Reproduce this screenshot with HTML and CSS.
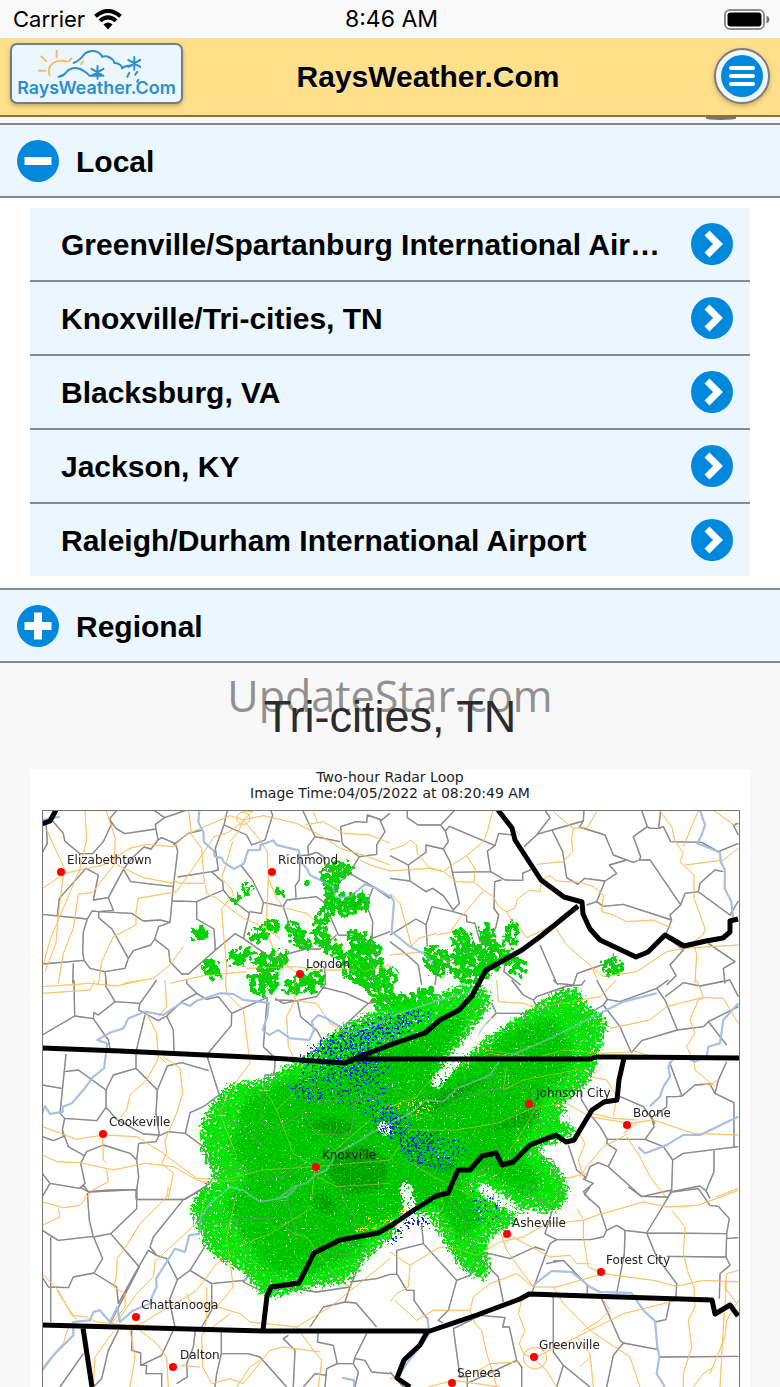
FILE: index.html
```html
<!DOCTYPE html>
<html lang="en">
<head>
<meta charset="utf-8">
<meta name="viewport" content="width=device-width, initial-scale=1">
<title>RaysWeather.Com</title>
<link rel="stylesheet" href="styles.css">
</head>
<body>
<div class="status">
  <div class="status-side">
    <span>Carrier</span>
    <svg class="wifi" viewBox="0 0 28 21" aria-hidden="true">
      <path d="M1.500 7.200Q14-3.200 26.500 7.200M6 11.800Q14 5 22 11.800" fill="none" stroke="#000" stroke-width="4"/>
      <path d="M9.500 15.500Q14 11.500 18.500 15.500L14 20.500Z"/>
    </svg>
  </div>
  <span class="clock">8:46 AM</span>
  <div class="status-side status-end">
    <svg class="battery" viewBox="0 0 46 21" aria-hidden="true">
      <rect x="1" y="1" width="39" height="19" rx="5" fill="#fff" stroke="#8c8c8c" stroke-width="2"/>
      <rect x="3.500" y="3.500" width="34" height="14" rx="3"/>
      <path d="M42.500 6.500Q45.500 8 45.500 10.500T42.500 14.500Z" fill="#777"/>
    </svg>
  </div>
</div>

<header class="bar">
  <a class="logo" href="#" aria-label="RaysWeather.Com home">
    <svg viewBox="0 0 170 58" aria-hidden="true">
      <g fill="none" stroke="#f5bd62" stroke-width="2">
        <path d="M38 31C34 20 44 13 56 17M45 5V13M29 11L35 17M26 26H34M57 17L60 13M72 16L69 20"/>
      </g>
      <g fill="none" stroke="#2b8fc9" stroke-width="2" stroke-linecap="round">
        <path d="M62 18C67 16 70 13 72 10C78 4 87 5 91 12C96 10 102 14 103 18C108 18 112 22 110 24Q114 20 120 21"/>
        <path d="M47 32Q52 31 54 28C60 21 68 23 72 26Q76 28 78 31H90"/>
        <path d="M80 24L92 31M92 24L80 31M86 21V34M117 15L129 22M129 15L117 22M123 12V25"/>
        <path d="M118 28L116 32M126 27L124 30M127 35L126 37"/>
      </g>
      <text class="logo-text" x="85" y="49" text-anchor="middle">RaysWeather.Com</text>
    </svg>
  </a>
  <h1 class="title">RaysWeather.Com</h1>
  <button class="menu" type="button" aria-label="Menu"><span class="menu-disc"><i></i><i></i><i></i></span></button>
</header>

<main>
  <button class="group" type="button" aria-expanded="true">
    <svg class="disc" viewBox="0 0 42 42" aria-hidden="true"><circle cx="21" cy="21" r="21"/><path d="M7.500 21H34.500"/></svg>
    <span>Local</span>
  </button>
  <ul class="stations">
    <li><a href="#"><span>Greenville/Spartanburg International Airport</span><svg class="disc" viewBox="0 0 42 42" aria-hidden="true"><circle cx="21" cy="21" r="21"/><path class="chev" d="M16 10L27 21L16 32"/></svg></a></li>
    <li><a href="#"><span>Knoxville/Tri-cities, TN</span><svg class="disc" viewBox="0 0 42 42" aria-hidden="true"><circle cx="21" cy="21" r="21"/><path class="chev" d="M16 10L27 21L16 32"/></svg></a></li>
    <li><a href="#"><span>Blacksburg, VA</span><svg class="disc" viewBox="0 0 42 42" aria-hidden="true"><circle cx="21" cy="21" r="21"/><path class="chev" d="M16 10L27 21L16 32"/></svg></a></li>
    <li><a href="#"><span>Jackson, KY</span><svg class="disc" viewBox="0 0 42 42" aria-hidden="true"><circle cx="21" cy="21" r="21"/><path class="chev" d="M16 10L27 21L16 32"/></svg></a></li>
    <li><a href="#"><span>Raleigh/Durham International Airport</span><svg class="disc" viewBox="0 0 42 42" aria-hidden="true"><circle cx="21" cy="21" r="21"/><path class="chev" d="M16 10L27 21L16 32"/></svg></a></li>
  </ul>
  <button class="group" type="button" aria-expanded="false">
    <svg class="disc" viewBox="0 0 42 42" aria-hidden="true"><circle cx="21" cy="21" r="21"/><path d="M7.500 21H34.500M21 7.500V34.500"/></svg>
    <span>Regional</span>
  </button>

  <section class="radar">
    <div class="watermark">UpdateStar.com</div>
    <h2 class="place">Tri-cities, TN</h2>
    <figure class="loop">
      <figcaption>Two-hour Radar Loop<br>Image Time:04/05/2022 at 08:20:49 AM</figcaption>
      <svg class="map" viewBox="30 803 720 584" role="img" aria-label="Radar map">
        <defs>
          <clipPath id="frame"><rect x="42" y="810" width="697" height="590"/></clipPath>
          <filter id="f-bright" filterUnits="userSpaceOnUse" x="30" y="803" width="720" height="600" color-interpolation-filters="sRGB">
            <feGaussianBlur in="SourceAlpha" stdDeviation="8" result="b"/>
            <feTurbulence type="fractalNoise" baseFrequency="0.4" numOctaves="2" seed="4" result="n"/>
            <feComposite in="b" in2="n" operator="arithmetic" k1="10" k2="-2" k4="-1" result="m"/>
            <feComponentTransfer in="m" result="t"><feFuncA type="linear" slope="6"/></feComponentTransfer>
            <feFlood flood-color="#00e400"/><feComposite in2="t" operator="in"/>
          </filter>
          <filter id="f-cells" filterUnits="userSpaceOnUse" x="30" y="803" width="720" height="600" color-interpolation-filters="sRGB">
            <feGaussianBlur in="SourceAlpha" stdDeviation="4" result="b"/>
            <feTurbulence type="fractalNoise" baseFrequency="0.2" numOctaves="3" seed="9" result="n"/>
            <feComposite in="b" in2="n" operator="arithmetic" k1="12" k2="-3.200" k4="-1" result="m"/>
            <feComponentTransfer in="m" result="t"><feFuncA type="linear" slope="6"/></feComponentTransfer>
            <feFlood flood-color="#00d400"/><feComposite in2="t" operator="in"/>
          </filter>
          <filter id="f-mid" filterUnits="userSpaceOnUse" x="30" y="803" width="720" height="600" color-interpolation-filters="sRGB">
            <feGaussianBlur in="SourceAlpha" stdDeviation="9" result="b"/>
            <feTurbulence type="fractalNoise" baseFrequency="0.5" numOctaves="2" seed="14" result="n"/>
            <feComposite in="b" in2="n" operator="arithmetic" k1="8" k2="-2" k4="-1" result="m"/>
            <feComponentTransfer in="m" result="t"><feFuncA type="linear" slope="2"/></feComponentTransfer>
            <feFlood flood-color="#00be00"/><feComposite in2="t" operator="in"/>
          </filter>
          <filter id="f-dark" filterUnits="userSpaceOnUse" x="30" y="803" width="720" height="600" color-interpolation-filters="sRGB">
            <feGaussianBlur in="SourceAlpha" stdDeviation="6" result="b"/>
            <feTurbulence type="fractalNoise" baseFrequency="0.5" numOctaves="2" seed="23" result="n"/>
            <feComposite in="b" in2="n" operator="arithmetic" k1="4" k4="-1.500" result="m"/>
            <feComponentTransfer in="m" result="t"><feFuncA type="linear" slope="2"/></feComponentTransfer>
            <feFlood flood-color="#009a00"/><feComposite in2="t" operator="in"/>
          </filter>
          <filter id="f-white" filterUnits="userSpaceOnUse" x="30" y="803" width="720" height="600" color-interpolation-filters="sRGB">
            <feGaussianBlur in="SourceAlpha" stdDeviation="3" result="b"/>
            <feTurbulence type="fractalNoise" baseFrequency="0.4" numOctaves="2" seed="7" result="n"/>
            <feComposite in="b" in2="n" operator="arithmetic" k1="10" k2="-2" k4="-1" result="m"/>
            <feComponentTransfer in="m" result="t"><feFuncA type="linear" slope="6"/></feComponentTransfer>
            <feFlood flood-color="#fff"/><feComposite in2="t" operator="in"/>
          </filter>
          <filter id="f-blue" filterUnits="userSpaceOnUse" x="30" y="803" width="720" height="600" color-interpolation-filters="sRGB">
            <feGaussianBlur in="SourceAlpha" stdDeviation="5" result="b"/>
            <feTurbulence type="fractalNoise" baseFrequency="0.4" numOctaves="2" seed="31" result="n"/>
            <feComposite in="b" in2="n" operator="arithmetic" k1="4" k4="-2.150" result="m"/>
            <feComponentTransfer in="m" result="t"><feFuncA type="linear" slope="12"/></feComponentTransfer>
            <feFlood flood-color="#0a2fc8"/><feComposite in2="t" operator="in"/>
          </filter>
          <filter id="f-yellow" filterUnits="userSpaceOnUse" x="30" y="803" width="720" height="600" color-interpolation-filters="sRGB">
            <feGaussianBlur in="SourceAlpha" stdDeviation="2" result="b"/>
            <feTurbulence type="fractalNoise" baseFrequency="0.4" numOctaves="2" seed="44" result="n"/>
            <feComposite in="b" in2="n" operator="arithmetic" k1="4" k4="-2.200" result="m"/>
            <feComponentTransfer in="m" result="t"><feFuncA type="linear" slope="12"/></feComponentTransfer>
            <feFlood flood-color="#e6f000"/><feComposite in2="t" operator="in"/>
          </filter>
          <g id="lines">
            <g transform="translate(30 765) scale(.33333)">
              <path class="county" d="M37 262L52 235L48 168M68 168L100 205L104 228L150 266H188L220 230L243 180L240 160L260 136M240 165L258 190L284 206L378 192L376 178L404 158L370 135M404 158L470 135M378 192L384 225L363 252L342 246L310 275L282 310L235 398L190 405L205 330L168 310L88 400L82 450M384 225L395 218L436 236L443 258L430 365L302 350L282 315M430 240L475 205L518 195M443 336L545 320L565 315L556 250L582 180L592 136M582 180L650 210L665 240L705 225L728 150L722 136M545 320L578 350L580 375L500 410L426 408L430 365M426 408L420 472L390 465L340 468L305 445L206 440L186 438L172 462L37 448M235 398L250 436L206 440L206 458L246 492L295 580L310 557L362 540L374 522L386 485L420 472M172 462L160 500L158 560L162 586L180 610L225 620L285 610L295 580M162 586L37 597M500 410L500 462L552 492L556 556L475 627L455 627L420 590L416 555L374 522M556 556L615 506L640 520L658 445L600 400L580 375M632 300L668 346L700 412L694 445L658 440M700 412L760 425L770 405L860 395L882 412L908 370L958 325L988 275L940 240L936 230L932 185L978 170L1010 172L1012 150L1055 165L1080 145M988 275L1040 268V240L1065 200L1050 165M818 136L855 215L833 245L836 270L810 272L808 345L796 362L798 398M855 215L930 230M836 270L860 262L880 275L890 320L958 325L1030 365L1080 400M1030 365L1010 420L1028 470L1026 520L1080 500M882 412L925 510L1000 512L1040 570L1020 660M760 425L785 500L826 552H870L920 510M640 520L725 580L826 552M725 580L700 660M886 660L884 610L860 590M225 620L230 660M130 595L128 655"/>
              <path class="road" d="M165 136L170 225L150 310L60 525L40 600M50 195L103 310L85 450L78 535L45 620M228 136L256 220L252 300L188 382L145 388L130 490L100 565L85 655M37 370L105 325L165 312L220 300L300 250L350 238L430 245L470 208L600 152L640 165L700 152L800 175L860 205L935 252L1000 270L1080 300M430 355L340 338L262 300M318 440L325 400L440 380L530 250L552 215L590 205L640 170M526 355L450 355L430 345M523 355L515 250L485 210L476 136M526 358L530 385L560 400L640 460L700 485L750 520M608 230L575 340L605 372L610 390L575 430L580 500L590 600L586 660M318 440V480L250 515L215 590L205 660M640 165L668 140L620 136M640 165L625 200L600 230M640 165L690 225L712 260L715 340L708 500L730 550L780 610L830 640M770 430L830 445L890 500L1000 620L1080 600M650 610L800 605L860 615H980M280 655L370 640L420 600L460 545M420 655L520 632L650 620M826 180L880 170L940 205L1020 210L1080 235M850 140L862 170M1080 318L1020 300L990 285M715 340L740 400L762 430M620 160A20 18 0 1 0 660 160A20 18 0 1 0 620 160"/>
              <path class="river" d="M508 136L505 172L520 200L522 232L552 258L554 275L575 278L582 292L612 312L642 295L654 256L690 255L692 240L730 226L740 240L806 256L812 290L830 310L840 330L910 365L915 395L960 395L1005 358L1035 368L1080 395M37 165L90 155"/>
            </g>
            <g transform="translate(390 765) scale(.33333)">
              <path class="county" d="M52 136V158L84 180H152L194 136M152 180L166 198L175 230L160 252L108 240V262L55 300L0 272M55 300L60 348L0 340M60 348L108 380L128 370L160 392L190 435L208 415L180 290L160 252M166 198L178 184L315 242L326 205L368 210M315 242L292 258L302 320L186 322M302 320L345 345L398 346V325L430 310M402 245L440 210L480 158L465 136M440 208L580 168L582 136M580 168L568 186L645 210L670 270L730 292L748 285L752 275L730 215L772 185L755 136M486 195L518 260L530 338L564 358L584 340L645 348L680 325L658 300L710 285M645 348L620 410L640 424L700 418L845 465L840 450L872 420L780 285L748 285M620 410L590 420M772 185L780 190H806L812 136M806 190L820 185L842 230L935 232L985 260L1045 235M872 420L885 385L925 380L930 355L975 315L1000 320M925 380L1020 450L1045 408M935 232L985 260M845 465L826 512M335 345L314 350L312 430L326 450L318 485L300 520L270 530L255 475L230 470V452L190 440L125 425L108 480L112 545M0 510L78 462L110 480M0 530L40 560L85 600L95 660M135 660L140 620L210 565L300 525M450 540L500 655L550 660L562 625L670 588V565M955 535L1035 590L1000 610L1005 655M826 512L880 555L840 600L858 632L830 660M345 595L342 620L392 660M1045 175L1030 180L1045 210"/>
              <path class="road" d="M0 255L45 240L60 225L80 240L82 265L118 308L160 320L186 300L230 272L280 230L292 200L308 136M0 318L118 310L160 320L200 350L250 352M230 272L255 310L252 352L280 375L310 395L326 425L350 440L365 468L390 490L410 518L490 480L530 540L605 605L640 635L740 620L830 560L880 550L1045 540M350 440L375 430L382 402L420 375L450 380L455 345L480 332L500 348L570 352L610 365L640 390L636 440L670 450L710 470L790 465L845 490M440 298L520 290L548 260L545 220L550 190L490 140M550 190L592 188L620 140M365 185L390 210M808 136L845 185L855 228L880 265L870 290L880 300L912 330V400L945 490L940 510L910 530L920 570L915 655M880 245L925 136M885 300L1000 285L1045 250M970 136L1040 185M140 510L180 502L210 460L280 378M0 385L30 415L65 545L85 520L140 505M0 570L110 560L200 600L240 640M605 605L620 640"/>
              <path class="river" d="M930 136L945 180L935 210L922 235L990 262L992 290L1005 315L1004 370L1024 410L1030 470M0 390L12 410L5 500L60 545L110 570L130 600"/>
            </g>
            <g transform="translate(30 980) scale(.33333)">
              <path class="county" d="M132 0L134 108L37 165M134 108L190 116L192 98L205 105L255 65L228 20V0M255 65L330 70L380 0M190 116L235 180L240 205M330 70L326 90L385 122L410 108L430 150L432 220M345 105L318 215L318 265L250 285L228 330L145 270L105 275M410 108L455 65L500 40L470 10V0M500 40L530 58L565 50L605 100L604 136L530 225L568 345L550 358L600 420L655 460L700 500M605 100L712 52M108 222L90 400L104 415L200 422L228 382V330M318 265L382 330L378 400L388 465L340 462L262 420L228 382M382 330L412 258L455 248L536 272M550 358L520 380L480 398L466 460L415 455L386 468L378 485L326 490L320 540L300 520L220 495L170 515L152 550L165 610L150 625L60 610L37 580M104 415L97 450L100 470L70 482L37 470M97 450L115 500L165 528M60 610L37 650M466 460L520 500L555 585L540 610L465 658H320V628L240 630L175 635L160 615M320 540L326 590L320 628M318 628V658M555 585L580 570L640 560L700 600L760 590L800 560L860 540M700 200L736 235L732 285H705L700 320L690 430L740 450L822 395L850 450L860 462L960 465M712 52L700 200M736 60L802 62L812 110L860 150L885 195M735 55L760 70L860 50L888 10M870 20L950 40L1015 70L940 140M1015 70L1080 60M1048 90L1080 220M850 250L855 370L1000 360L1080 345M960 465L980 350M37 315L95 325"/>
              <path class="road" d="M37 20L180 10L260 18L340 0M37 40L180 30L195 0M405 0L410 80L385 110M350 100L380 160L385 235L350 300L300 345L290 390L270 412M390 232L410 250M400 230L450 265L458 340L440 400L405 480L410 520L395 550L430 580L415 655M586 0L590 40L640 90L660 250L600 330L570 400L620 530M37 440L140 478L220 465L320 470L400 520L500 595L580 600L700 570L855 560M218 470L220 540L230 550M37 525L80 545L150 548L250 570L345 550L430 560L500 600L540 610L620 600M230 570L235 605L180 635L160 655M700 320L740 390L790 520L855 560L950 480L1080 370M740 390L820 310M795 0V60L770 110L775 200L790 230M800 62L860 70L900 130L960 170M855 560L845 660M855 560L1080 540M860 590L920 620L1080 610"/>
              <path class="river" d="M37 400L45 378L60 402L98 395V380L125 370L160 330L190 290L222 265L232 190L202 180L240 158L280 145L295 115L345 95L400 105L455 68L480 78L500 62L570 40L610 42L640 60L716 68L712 110L698 150L718 165L745 150L780 175L838 180L852 150L845 125L865 105L890 115L960 160L1080 120M1080 430L1030 455L975 490L920 520L890 570L855 585L830 610L790 620L740 660"/>
            </g>
            <g transform="translate(390 980) scale(.33333)">
              <path class="county" d="M365 0L400 45L430 60L440 50L530 18L575 15L585 0M505 15L490 0M430 60L443 85L405 100H318L280 140L265 165M318 98L305 70M620 0L652 58L640 75L590 105L535 110M640 75L690 140L724 218L755 182L862 150L825 60L800 25L835 0M652 58L690 65L800 25M825 50L880 8L930 18L1020 0L1045 50M862 150L940 140L955 125L1045 80M955 125L1010 195M838 245L876 348L860 350H830V380L795 408M876 348L915 315L960 312L975 340L1032 368V500M1010 245L985 300L975 340M1045 500L880 520L848 540L845 630L755 650L655 560L680 510L650 490L652 478H765L792 440L785 408M848 540L820 500L765 478M972 512V575L948 632L930 618L845 635M690 350L760 380L795 430M602 405L630 440L652 478M655 560L625 548L600 560L585 600L610 610L580 635L600 660M0 320L45 350L50 400L60 480M50 400L120 420L200 360L300 330L400 318L430 340L425 380L440 410L480 440M300 300L310 330V480L330 520M300 300L310 270M535 495L560 570L585 590L580 600M430 510L470 535L490 540L510 620L515 655M200 580L230 620L290 560L330 520M610 270L570 320L575 360L602 405M845 630L830 660M948 632L960 655M430 180L400 100M520 210L535 240"/>
              <path class="road" d="M0 380L80 350L120 300L200 260L300 220L420 240L520 210L640 220L740 215L800 235M320 0L325 65L400 70L440 85L540 65L630 50L680 0M660 145L780 120L830 80L940 52L1000 55L1045 130M940 55L925 60L900 120L915 160L890 200L912 245L915 270L975 320M920 0L940 50M0 540L60 450L200 450L320 430L440 380L530 370L600 410L720 430L790 420L910 460L1045 465M440 380L400 450L340 540M670 410L680 350L650 300L600 290L550 260M600 400L670 415L740 420M710 460L700 470L640 500L590 560L570 590M710 470L750 530L780 590L830 655M555 440L585 490L565 540L580 590M740 430L700 460M50 540L130 590L250 650M1045 625L980 650M985 300L960 315L930 310M350 260L340 330L400 300L560 270M510 600L590 580M240 175L290 210L420 230"/>
              <path class="river" d="M0 430L60 400L110 360L160 365L200 325L240 310L300 285L330 240L470 180L620 105L700 65L800 40M1045 70L1000 120L990 190L955 200L950 230L915 245L880 230L850 235L835 260L840 290L820 320L810 350L780 378M745 502L765 520L830 495L880 465H930L1045 410M0 110L150 60L260 30"/>
            </g>
            <g transform="translate(30 1187) scale(.33333)">
              <path class="county" d="M150 0L175 15L320 8V38L460 38L530 0M320 38V65L242 140L190 150L178 100L172 18M37 130L85 160L190 148L218 215L192 258L130 270L115 302L55 300L37 270M242 140L328 240L240 410M192 258L260 300L265 350L320 250L355 190L380 205L410 215L442 278L418 340L435 420M460 38L370 150L360 180L380 205M442 278L480 250L530 170L515 100L545 60L580 75L575 105L620 95L740 95L800 148M620 95L665 255L640 285L710 320L760 300L860 315L960 300L1000 205L880 200M480 250L545 290L640 280M545 290V370L515 420M62 150V405M265 430L235 490L215 575L190 600M160 500L90 600M305 430V490L332 498V535L395 505L430 430M332 535H350L348 560H395V600M496 430L490 480L470 530L472 570L440 590M574 435V500H655L690 510L770 600M574 500L560 560L555 600M775 445L760 455L795 490L790 600M865 435L862 465L910 475L922 530H970L975 510L1010 440M975 515L1005 520L1025 555L1080 560M922 530L890 545L885 600M820 600L855 560L890 565M970 530L985 555L975 600M945 345L880 360L840 420M945 345L978 348L1040 420M945 345L960 300M960 285L1040 275L1080 262M930 0L950 60L975 90V130M800 148L770 30L780 0"/>
              <path class="road" d="M415 0L410 30L330 110L290 175L262 215L258 275L252 300L285 320V360L245 410M525 30L510 100L400 200L375 225L370 270L320 320L260 405M37 45L100 62L150 55L185 15M37 115L90 90L85 65M37 260L85 310L125 385L140 395M80 310L130 385L170 390L200 405L290 415L330 412L400 370L470 330L500 310L560 230L620 180L720 140L850 60M470 320L480 345L530 350L630 380L660 405L800 420L900 360L1000 280L1080 215M530 300V400L515 450L518 540L545 590M330 430L380 470L410 510L415 600M37 540L100 470L115 420M190 600L195 510L250 435M300 600L315 510L300 430M450 535L510 540M600 380L555 415L520 440M545 590L600 575L640 590L720 490L760 480L870 495M800 420L850 490L875 520L865 600M620 600L660 540L690 520M790 140L830 150L880 220L940 290L965 300M620 20L590 150L610 300L560 360"/>
              <path class="river" d="M37 550L70 505L130 445V405L180 400L190 375L210 370L240 405L262 360L270 405L310 370L360 350L368 325L380 300L378 275L410 225L435 185L465 195L478 145L508 140L512 90L540 50L600 0L640 10L690 45L770 30L800 0M937 572L972 580V600"/>
            </g>
            <g transform="translate(390 1187) scale(.33333)">
              <path class="county" d="M600 0L583 22L628 62L650 130L640 150L600 158H500L465 140L490 60M500 158L480 170L468 200L435 290L425 320M650 130L680 115L705 130L770 138L835 30L755 28L715 0M845 15L835 30M770 138L1010 140L1018 95L985 58L960 55L925 5L845 15M1010 140V155L1045 152M1010 140L1008 210L830 208M770 138L800 210L860 290L858 330M1008 210L1020 235L990 260L988 335M705 130L703 200L680 320M468 230L520 220L592 295V320M520 220L490 222M300 200L360 215L435 180L465 190M265 215L300 200M260 205L240 265L200 280L175 370L145 400L158 408M100 170L200 280M20 265V190L100 170L95 110M0 262H22L50 310H72V340L115 400M272 215L325 270L340 345M190 425L272 385L345 392L338 420H358L380 520L395 540V600M190 425L210 570L232 568V600M230 590L380 520M490 330V495L520 535L600 600M520 535L500 600M635 335L690 460L700 468L805 488M700 468L670 505L650 600M840 340L828 398L795 405M810 510L1045 508M0 555L40 600M175 30L220 90L230 140L260 200M340 20L430 0L440 40L490 60"/>
              <path class="road" d="M0 195L60 235L150 180L200 185L260 205L330 165L400 150L470 110L530 105L580 100L620 85L760 45L830 60L925 55L1045 10M330 130L350 190L400 260L430 300L500 300L640 260L790 280L860 298L940 280L1045 285M580 100V150L595 240L640 260M350 140L480 210L540 205L560 230L600 230M845 70L885 120L880 200L895 260L912 300L915 360L895 400L905 480L880 560L880 600M60 235L55 300L20 320L0 345M15 340L80 400L130 370L240 370L250 330L300 290L380 260L430 300M240 370L255 410L275 430L290 500L310 560L320 600M395 340L385 380L405 430L388 470L400 500L430 515L560 450L700 380L900 330M490 300L520 350L600 430L720 510L750 600M560 450L600 500L610 600M570 540L600 510M390 525L300 530L250 560M430 515L470 550L500 600M400 510A30 28 0 1 0 470 515A32 28 0 1 0 400 510M1010 280L1000 420L990 600M1045 340L1010 400L1005 450L960 560M910 600L940 560L970 540M1045 250L1010 260L1005 300L1040 350M115 600L190 580L330 600M0 575L30 570M560 65L580 95M150 0L160 60L130 110L200 140M640 340L660 370L630 400L580 430"/>
              <path class="river" d="M430 295L485 252L545 255L600 300L630 315L725 318L760 370L795 402L802 480L808 510L800 560L825 600M112 390L118 440L90 480L50 530L25 570L50 600"/>
            </g>
          </g>
        </defs>
        <g clip-path="url(#frame)">
          <use href="#lines"/>
          <g filter="url(#f-cells)"><g transform="translate(180 840) scale(.33333)">
            <path d="M425 85L500 60L525 95L475 125L430 130ZM440 120L475 150L455 190L430 160ZM445 175L555 155L570 205L500 225L415 225ZM180 135L225 135L205 178ZM140 180L185 160L170 205ZM280 148L318 148L312 185ZM350 120L390 118L378 150ZM205 280L290 230L300 265L230 310L205 300ZM45 260L95 265L65 305L32 298ZM320 240L360 260L395 310L385 340L335 305ZM395 240L440 225L435 270L475 310L495 350L435 335L405 290ZM145 340L205 320L215 360L155 383ZM225 345L325 330L315 380L235 390ZM205 400L285 390L295 445L240 470L210 440ZM65 365L105 355L125 420L80 415ZM355 395L435 395L425 435L400 460L355 440ZM315 425L350 420L350 465L315 460ZM500 265L560 280L605 330L590 400L535 390L525 350ZM475 350L540 340L560 395L600 375L655 400L625 450L570 445L495 410ZM730 315L795 330L805 400L760 415L735 365ZM815 270L865 270L875 325L920 300L960 320L985 360L925 405L870 430L825 410L815 350L825 330ZM905 250L945 260L945 320L900 330ZM985 235L1010 255L1000 330L975 320ZM985 345L1035 360L1025 415L995 405ZM555 430L620 460L700 470L735 435L765 445L750 520L650 530L595 510Z"/>
            <path d="M1270 355L1330 360L1315 408L1270 400Z"/>
          </g></g>
          <g filter="url(#f-bright)"><g transform="translate(180 840) scale(.33333)">
            <path d="M140 745L270 725L330 680L400 650L440 600L540 540L640 510L760 480L850 440L930 455L920 500L850 590L790 660L770 700L840 680L900 620L1000 550L1120 470L1190 440L1210 510L1275 530L1260 600L1240 650L1240 700L1170 760L1120 800L1150 830L1200 850L1150 890L1060 920L1110 970L1160 1040L1140 1110L1040 1100L940 1060L870 1010L860 1040L1000 1110L1000 1150L900 1190L930 1330L850 1280L800 1200L750 1110L680 1110L640 1180L550 1250L500 1320L400 1330L360 1340L260 1370L200 1290L100 1240L50 1140L40 1080L130 1010L80 960L70 850Z"/>
          </g></g>
          <g filter="url(#f-mid)"><g transform="translate(180 840) scale(.33333)">
            <path d="M190 770L420 680L640 600L780 540L880 490L850 580L740 720L840 690L980 570L1120 520L1170 600L1190 680L1080 770L1080 860L990 920L1110 1030L1040 1080L880 980L830 1020L930 1140L860 1180L870 1260L760 1080L620 1140L500 1260L380 1310L260 1300L180 1180L120 1090L220 1010L140 940L170 860Z"/>
          </g></g>
          <g filter="url(#f-dark)"><g transform="translate(180 840) scale(.33333)">
            <path d="M660 800L780 740L900 700L960 690L900 750L780 820L700 840ZM340 830L480 820L560 850L480 910L380 870ZM440 930L560 900L640 960L620 1060L500 1080L430 1010ZM690 940L860 960L820 1010L720 990ZM400 1020L500 1100L440 1140L380 1100ZM450 175L560 165L560 215L470 210ZM330 260L385 320L345 290ZM215 285L255 265L245 305ZM745 335L795 355L785 400ZM830 285L855 360L940 330L890 405L865 370ZM240 355L310 345L280 380ZM220 420L275 400L265 445ZM890 860L1000 820L1100 760L1080 850L960 890Z"/>
          </g></g>
          <g filter="url(#f-white)"><g class="gap" transform="translate(180 840) scale(.33333)"><path d="M935 540L880 600L835 650L800 690L760 740M900 1040L960 1080L1010 1110M675 1030L690 1100L660 1180M600 850L630 880M1080 925L1150 960M1140 830L1230 850"/></g></g>
          <g filter="url(#f-blue)"><g transform="translate(180 840) scale(.33333)">
            <path d="M400 640L440 570L560 540L640 520L740 490L720 560L600 600L560 640L590 700L560 730L500 700ZM560 850L640 790L700 830L650 890L580 890ZM630 880L760 880L770 930L700 980ZM680 1110L750 1110L780 1190L700 1170L650 1230L560 1270ZM655 1010L700 1010L705 1080L670 1070ZM240 710L340 725L460 790L400 810L330 770ZM730 760L860 620L890 630L800 740L730 790Z"/>
            <path opacity=".85" d="M320 640L400 590L560 520L800 480L780 540L640 620L650 830L790 860L900 900L830 1010L700 1000L560 840L350 760ZM690 460L740 450L800 500ZM850 1020L960 1060L1000 1110L930 1190L860 1140Z"/>
          </g></g>
          <g filter="url(#f-yellow)"><g transform="translate(180 840) scale(.33333)">
            <path d="M540 1095L590 1140L680 1095L695 1110L580 1180L465 1190L560 1150ZM580 440L605 445L605 475L585 475Z"/>
            <path opacity=".9" d="M600 790L780 760L780 800L700 870L680 830Z"/>
          </g></g>
          <use class="overlay" href="#lines"/>
          <g class="state">
            <path d="M42 1048L120 1051L270 1058L345 1063L356 1059H590L596 1057H624L739 1058M346 1062L366 1054L398 1042L425 1033L440 1020L459 1010L472 996L486 970L522 950L541 936L578 906M498 810L512 828L515 840L541 880L564 897L582 902L583 914L590 929L600 940L636 957L648 952L665 935L684 946L706 941L723 938L730 932L730 921L738 919M624 1058L619 1080L617 1100L604 1102L592 1110L574 1140L566 1142L556 1135L530 1145L513 1162L502 1165L496 1153L482 1156L470 1170H458L448 1193L436 1196L414 1210L392 1225L378 1233L340 1240L314 1253L299 1283L271 1287L267 1296L263 1330M42 1325L263 1331H430L477 1315L520 1299L529 1294L712 1300L715 1314L730 1305L738 1316M83 1328L92 1387M427 1332L420 1345L404 1360L397 1378L410 1387M42 824L50 821L56 810"/>
          </g>
          <g class="city-dot">
            <circle cx="61" cy="872" r="4"/><circle cx="272" cy="872" r="4"/><circle cx="300" cy="974" r="4"/><circle cx="103" cy="1134" r="4"/><circle cx="316" cy="1167" r="4"/><circle cx="529" cy="1104" r="4"/><circle cx="627" cy="1125" r="4"/><circle cx="136" cy="1317" r="4"/><circle cx="173" cy="1367" r="4"/><circle cx="507" cy="1234" r="4"/><circle cx="601" cy="1272" r="4"/><circle cx="534" cy="1357" r="4"/><circle cx="452" cy="1383" r="4"/>
          </g>
        </g>
        <rect x="42.500" y="810.500" width="697" height="600" fill="none" stroke="#777"/>
        <g class="city">
          <text x="67" y="864">Elizabethtown</text>
          <text x="278" y="864">Richmond</text>
          <text x="306" y="968">London</text>
          <text x="109" y="1126">Cookeville</text>
          <text x="322" y="1159">Knoxville</text>
          <text x="536" y="1097">Johnson City</text>
          <text x="633" y="1117">Boone</text>
          <text x="141" y="1309">Chattanooga</text>
          <text x="180" y="1359">Dalton</text>
          <text x="512" y="1227">Asheville</text>
          <text x="606" y="1264">Forest City</text>
          <text x="539" y="1349">Greenville</text>
          <text x="457" y="1377">Seneca</text>
        </g>
      </svg>
    </figure>
  </section>
</main>
</body>
</html>
```
FILE: styles.css
```css
* { box-sizing: border-box; }
body { margin: 0; background: #f8f8f8; color: #000; font-family: "Liberation Sans", Arial, sans-serif; }
.status { display: grid; grid-template-columns: 1fr auto 1fr; align-items: center; height: 38px; padding: 0 10px 0 13px; background: #f9f9f9; font: 22px Inter, sans-serif; }
.clock { font-size: 23px; }
.status-side { display: flex; align-items: center; gap: 9px; }
.status-end { justify-content: flex-end; }
.wifi { width: 28px; height: 21px; }
.battery { width: 46px; height: 21px; }
.bar { position: relative; display: grid; grid-template-columns: 1fr auto 1fr; align-items: center; height: 79px; padding: 0 10px; background: #fedf8a; border-bottom: 2px solid #89752f; }
.bar::after { content: ""; position: absolute; right: 44px; bottom: -5px; width: 30px; height: 3px; border-radius: 0 0 50% 50%; background: #77736c; }
.logo { width: 173px; height: 61px; margin-bottom: 6px; border: 2px solid #737c85; border-radius: 7px; background: #ebf6ff; box-shadow: 0 2px 4px #8a753f80; }
.logo svg { display: block; width: 100%; }
.logo-text { font: 600 18px Inter, sans-serif; fill: #2b8fc9; }
.title { margin: 0 0 0 76px; font-size: 30px; line-height: 36px; text-shadow: 0 1px 0 #f3f3f3; }
.menu { justify-self: end; display: grid; place-items: center; width: 56px; height: 56px; margin-bottom: 2px; padding: 0; border: 2px solid #7d7b80; border-radius: 50%; background: #f0f7ff; box-shadow: 0 2px 4px #8a753f80; }
.menu-disc { display: flex; flex-direction: column; align-items: center; justify-content: center; gap: 4px; width: 42px; height: 42px; border-radius: 50%; background: #0088dd; }
.menu-disc i { width: 26px; height: 4px; border-radius: 2px; background: #fff; }
main { padding-top: 6px; }
.group { display: flex; align-items: center; gap: 17px; width: 100%; height: 75px; padding: 0 17px; border: solid #828b92; border-width: 2px 0; border-radius: 0; background: #ebf6ff; color: #000; font: bold 30px "Liberation Sans", Arial, sans-serif; text-align: left; }
.group span, .stations span { padding-top: 2px; }
.disc { flex: none; width: 42px; height: 42px; fill: #0088dd; stroke: none; }
.disc path { fill: none; stroke: #fff; stroke-width: 8; }
.disc .chev { stroke-width: 7; }
.stations { margin: 0; padding: 10px 30px 12px; background: #fff; list-style: none; }
.stations li { border-bottom: 2px solid #828b92; background: #ebf6ff; }
.stations li:last-child { border-bottom: 0; }
.stations a { display: flex; align-items: center; justify-content: space-between; gap: 28px; height: 72px; padding: 0 17px 0 31px; color: #000; font-weight: bold; font-size: 30px; line-height: 36px; text-decoration: none; }
.stations span { overflow: hidden; text-overflow: ellipsis; white-space: nowrap; }
.radar { position: relative; padding: 27px 30px 0; background: #f8f8f8; }
.watermark { position: absolute; top: 3px; left: 0; right: 0; color: #909090; font: 43px/60px "Open Sans", sans-serif; text-align: center; }
.place { position: relative; margin: 0 0 25px; color: #2c2c2c; font-weight: normal; font-size: 45px; line-height: 54px; text-align: center; }
.loop { margin: 0; background: #fff; }
.loop figcaption { padding-bottom: 2px; color: #222; font: 14px/16px "DejaVu Sans", sans-serif; text-align: center; }
.map { display: block; width: 100%; }
.county, .road, .river { fill: none; stroke-linejoin: round; }
.county { stroke: #8b8b8b; stroke-width: 4; }
.road { stroke: #ffc060; stroke-width: 3; }
.river { stroke: #a6bfe6; stroke-width: 6; }
.overlay { opacity: .5; }
.gap { fill: none; stroke: #000; stroke-width: 28; }
.state { fill: none; stroke: #000; stroke-width: 5; stroke-linejoin: round; }
.city { fill: #222; font: 12px "DejaVu Sans", sans-serif; }
.city-dot { fill: #f00; }
```
